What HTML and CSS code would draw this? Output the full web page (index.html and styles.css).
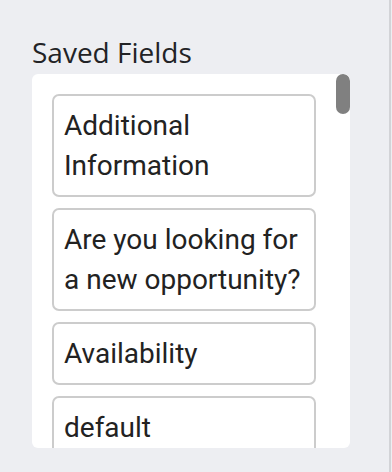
FILE: index.html
```html
<!DOCTYPE html>
<html lang="en">
<head>
<meta charset="utf-8">
<title>Saved Fields</title>
<link rel="stylesheet" href="styles.css">
</head>
<body>
<div class="page">
  <section class="saved">
    <h2 class="saved-title">Saved Fields</h2>
    <div class="panel">
      <ul class="field-list">
        <li class="field-card">Additional Information</li>
        <li class="field-card">Are you looking for a new opportunity?</li>
        <li class="field-card">Availability</li>
        <li class="field-card">default</li>
      </ul>
      <div class="scroll-thumb"></div>
    </div>
  </section>
</div>
</body>
</html>
```
FILE: styles.css
```css
html, body {
  margin: 0;
  padding: 0;
  background: #edeef2;
}
.page {
  width: 391px;
  height: 472px;
  border-right: 2px solid #d2d3d7;
  box-sizing: border-box;
  overflow: hidden;
}
.saved {
  padding: 33px 0 0 32px;
}
.saved-title {
  margin: 0 0 3px 0;
  font-family: "Open Sans", sans-serif;
  font-weight: 400;
  font-size: 28px;
  line-height: 38px;
  color: #222326;
}
.panel {
  position: relative;
  width: 318px;
  height: 374px;
  background: #ffffff;
  border-radius: 6px;
  overflow: hidden;
}
.field-list {
  list-style: none;
  margin: 0;
  padding: 20px 34px 0 20px;
  display: flex;
  flex-direction: column;
  gap: 11px;
}
.field-card {
  border: 2px solid #cccccc;
  border-radius: 7px;
  padding: 9.5px 10px;
  font-family: Roboto, sans-serif;
  font-size: 28px;
  line-height: 40px;
  color: #222222;
}
.scroll-thumb {
  position: absolute;
  top: 0;
  right: 0;
  width: 14px;
  height: 40px;
  border-radius: 7px;
  background: #808080;
}
```
